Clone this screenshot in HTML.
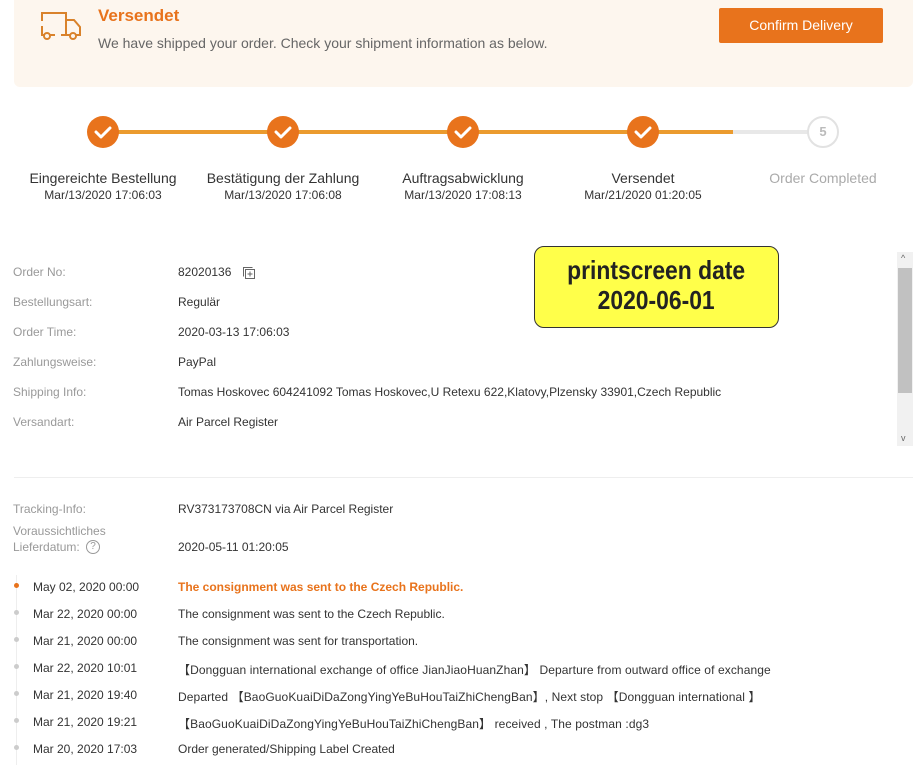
<!DOCTYPE html>
<html><head><meta charset="utf-8"><style>
*{margin:0;padding:0;box-sizing:border-box}
body{width:919px;height:765px;background:#fff;font-family:"Liberation Sans",Arial,sans-serif;position:relative;overflow:hidden;color:#333}
.a{position:absolute;white-space:nowrap}
.hdr{left:14px;top:0;width:899px;height:87px;background:#fdf6ee;border-radius:0 0 6px 6px}
.btn{left:719px;top:8px;width:164px;height:35px;background:#e8731c;border-radius:2px;color:#fff;font-size:14px;text-align:center;line-height:35px}
.c{width:32px;height:32px;border-radius:50%;background:#e8731c;top:116px}
.lbl{font-size:14px;color:#333;text-align:center;width:180px}
.dt{font-size:12px;color:#333;text-align:center;width:180px}
.il{font-size:12px;color:#999;left:13px}
.iv{font-size:12px;color:#333;left:178px}
.td{font-size:12px;color:#333;left:33px}
.tt{font-size:12px;color:#333;left:178px}
.dot{left:14px;width:5px;height:5px;border-radius:50%;background:#ccc}
</style></head><body>
<div class="a hdr"></div>
<svg class="a" style="left:40px;top:11px" width="42" height="30" viewBox="0 0 42 30" fill="none" stroke="#d9822b" stroke-width="2"><path d="M9 2H26V24H21M15 24H10M2 10V2H9M2 15V24H4"/><path d="M26 9H34L40 16V24H36M30 24H26"/><circle cx="7" cy="25" r="3"/><circle cx="33" cy="25" r="3"/><path d="M26 9V24"/></svg>
<div class="a" style="left:98px;top:6px;font-size:17px;font-weight:bold;color:#e8731c">Versendet</div>
<div class="a" style="left:98px;top:35px;font-size:14px;color:#666">We have shipped your order. Check your shipment information as below.</div>
<div class="a btn">Confirm Delivery</div>

<div class="a" style="left:103px;top:130px;width:630px;height:4px;background:#eb9b2e"></div>
<div class="a" style="left:733px;top:130px;width:90px;height:4px;background:#e8e8e8"></div>
<div class="a c" style="left:87px"></div><div class="a c" style="left:267px"></div><div class="a c" style="left:447px"></div><div class="a c" style="left:627px"></div>
<svg class="a" style="left:0;top:0" width="919" height="200"><g fill="none" stroke="#fff" stroke-width="3" stroke-linecap="round" stroke-linejoin="round"><path d="M96 132l5 5 9-9"/><path d="M276 132l5 5 9-9"/><path d="M456 132l5 5 9-9"/><path d="M636 132l5 5 9-9"/></g></svg>
<div class="a" style="left:807px;top:116px;width:32px;height:32px;border-radius:50%;background:#fff;border:2px solid #e2e2e2;color:#bbb;font-size:13px;font-weight:bold;text-align:center;line-height:28px">5</div>
<div class="a lbl" style="left:13px;top:170px">Eingereichte Bestellung</div><div class="a dt" style="left:13px;top:188px">Mar/13/2020 17:06:03</div>
<div class="a lbl" style="left:193px;top:170px">Bestätigung der Zahlung</div><div class="a dt" style="left:193px;top:188px">Mar/13/2020 17:06:08</div>
<div class="a lbl" style="left:373px;top:170px">Auftragsabwicklung</div><div class="a dt" style="left:373px;top:188px">Mar/13/2020 17:08:13</div>
<div class="a lbl" style="left:553px;top:170px">Versendet</div><div class="a dt" style="left:553px;top:188px">Mar/21/2020 01:20:05</div>
<div class="a lbl" style="left:733px;top:170px;color:#aaa">Order Completed</div>

<div class="a il" style="top:265px">Order No:</div><div class="a iv" style="top:265px">82020136</div>
<svg class="a" style="left:242px;top:266px" width="13" height="13" fill="none" stroke="#666" stroke-width="1"><rect x="3.5" y="3.5" width="9" height="9"/><path d="M1.5 10.5V1.5H10.5M8 5.5v5M5.5 8h5"/></svg>
<div class="a il" style="top:295px">Bestellungsart:</div><div class="a iv" style="top:295px">Regulär</div>
<div class="a il" style="top:325px">Order Time:</div><div class="a iv" style="top:325px">2020-03-13 17:06:03</div>
<div class="a il" style="top:355px">Zahlungsweise:</div><div class="a iv" style="top:355px">PayPal</div>
<div class="a il" style="top:385px">Shipping Info:</div><div class="a iv" style="top:385px">Tomas Hoskovec 604241092 Tomas Hoskovec,U Retexu 622,Klatovy,Plzensky 33901,Czech Republic</div>
<div class="a il" style="top:415px">Versandart:</div><div class="a iv" style="top:415px">Air Parcel Register</div>
<div class="a" style="left:897px;top:252px;width:16px;height:194px;background:#f1f1f1"></div>
<div class="a" style="left:898px;top:268px;width:14px;height:125px;background:#c1c1c1"></div>
<div class="a" style="left:901px;top:253px;font-size:9px;color:#666">^</div>
<div class="a" style="left:901px;top:433px;font-size:9px;color:#666">v</div>

<div class="a" style="left:534px;top:246px;width:245px;height:82px;background:#ffff4a;border:1px solid #333;border-radius:10px;text-align:center;font-size:26px;font-weight:bold;line-height:30px;padding-top:8px;color:#222"><span style="display:inline-block;transform:scaleX(0.88)">printscreen date<br>2020-06-01</span></div>

<div class="a" style="left:14px;top:477px;width:899px;height:1px;background:#eee"></div>
<div class="a il" style="top:502px">Tracking-Info:</div><div class="a iv" style="top:502px">RV373173708CN via Air Parcel Register</div>
<div class="a il" style="top:524px">Voraussichtliches</div>
<div class="a il" style="top:540px">Lieferdatum:</div>
<div class="a" style="left:86px;top:540px;width:14px;height:14px;border:1px solid #999;border-radius:50%;font-size:10px;color:#999;text-align:center;line-height:12px">?</div>
<div class="a iv" style="top:540px">2020-05-11 01:20:05</div>

<div class="a" style="left:16px;top:575px;width:1px;height:190px;background:#eee"></div>
<div class="a dot" style="top:583px;background:#e8731c"></div>
<div class="a td" style="top:580px">May 02, 2020 00:00</div><div class="a tt" style="top:580px;color:#e8731c;font-weight:bold">The consignment was sent to the Czech Republic.</div>
<div class="a dot" style="top:610px"></div>
<div class="a td" style="top:607px">Mar 22, 2020 00:00</div><div class="a tt" style="top:607px">The consignment was sent to the Czech Republic.</div>
<div class="a dot" style="top:637px"></div>
<div class="a td" style="top:634px">Mar 21, 2020 00:00</div><div class="a tt" style="top:634px">The consignment was sent for transportation.</div>
<div class="a dot" style="top:664px"></div>
<div class="a td" style="top:661px">Mar 22, 2020 10:01</div><div class="a tt" style="top:661px;letter-spacing:0.1px">【Dongguan international exchange of office JianJiaoHuanZhan】 Departure from outward office of exchange</div>
<div class="a dot" style="top:691px"></div>
<div class="a td" style="top:688px">Mar 21, 2020 19:40</div><div class="a tt" style="top:688px;letter-spacing:0.1px">Departed 【BaoGuoKuaiDiDaZongYingYeBuHouTaiZhiChengBan】, Next stop 【Dongguan international 】</div>
<div class="a dot" style="top:718px"></div>
<div class="a td" style="top:715px">Mar 21, 2020 19:21</div><div class="a tt" style="top:715px;letter-spacing:0.1px">【BaoGuoKuaiDiDaZongYingYeBuHouTaiZhiChengBan】 received , The postman :dg3</div>
<div class="a dot" style="top:745px"></div>
<div class="a td" style="top:742px">Mar 20, 2020 17:03</div><div class="a tt" style="top:742px">Order generated/Shipping Label Created</div>
</body></html>
